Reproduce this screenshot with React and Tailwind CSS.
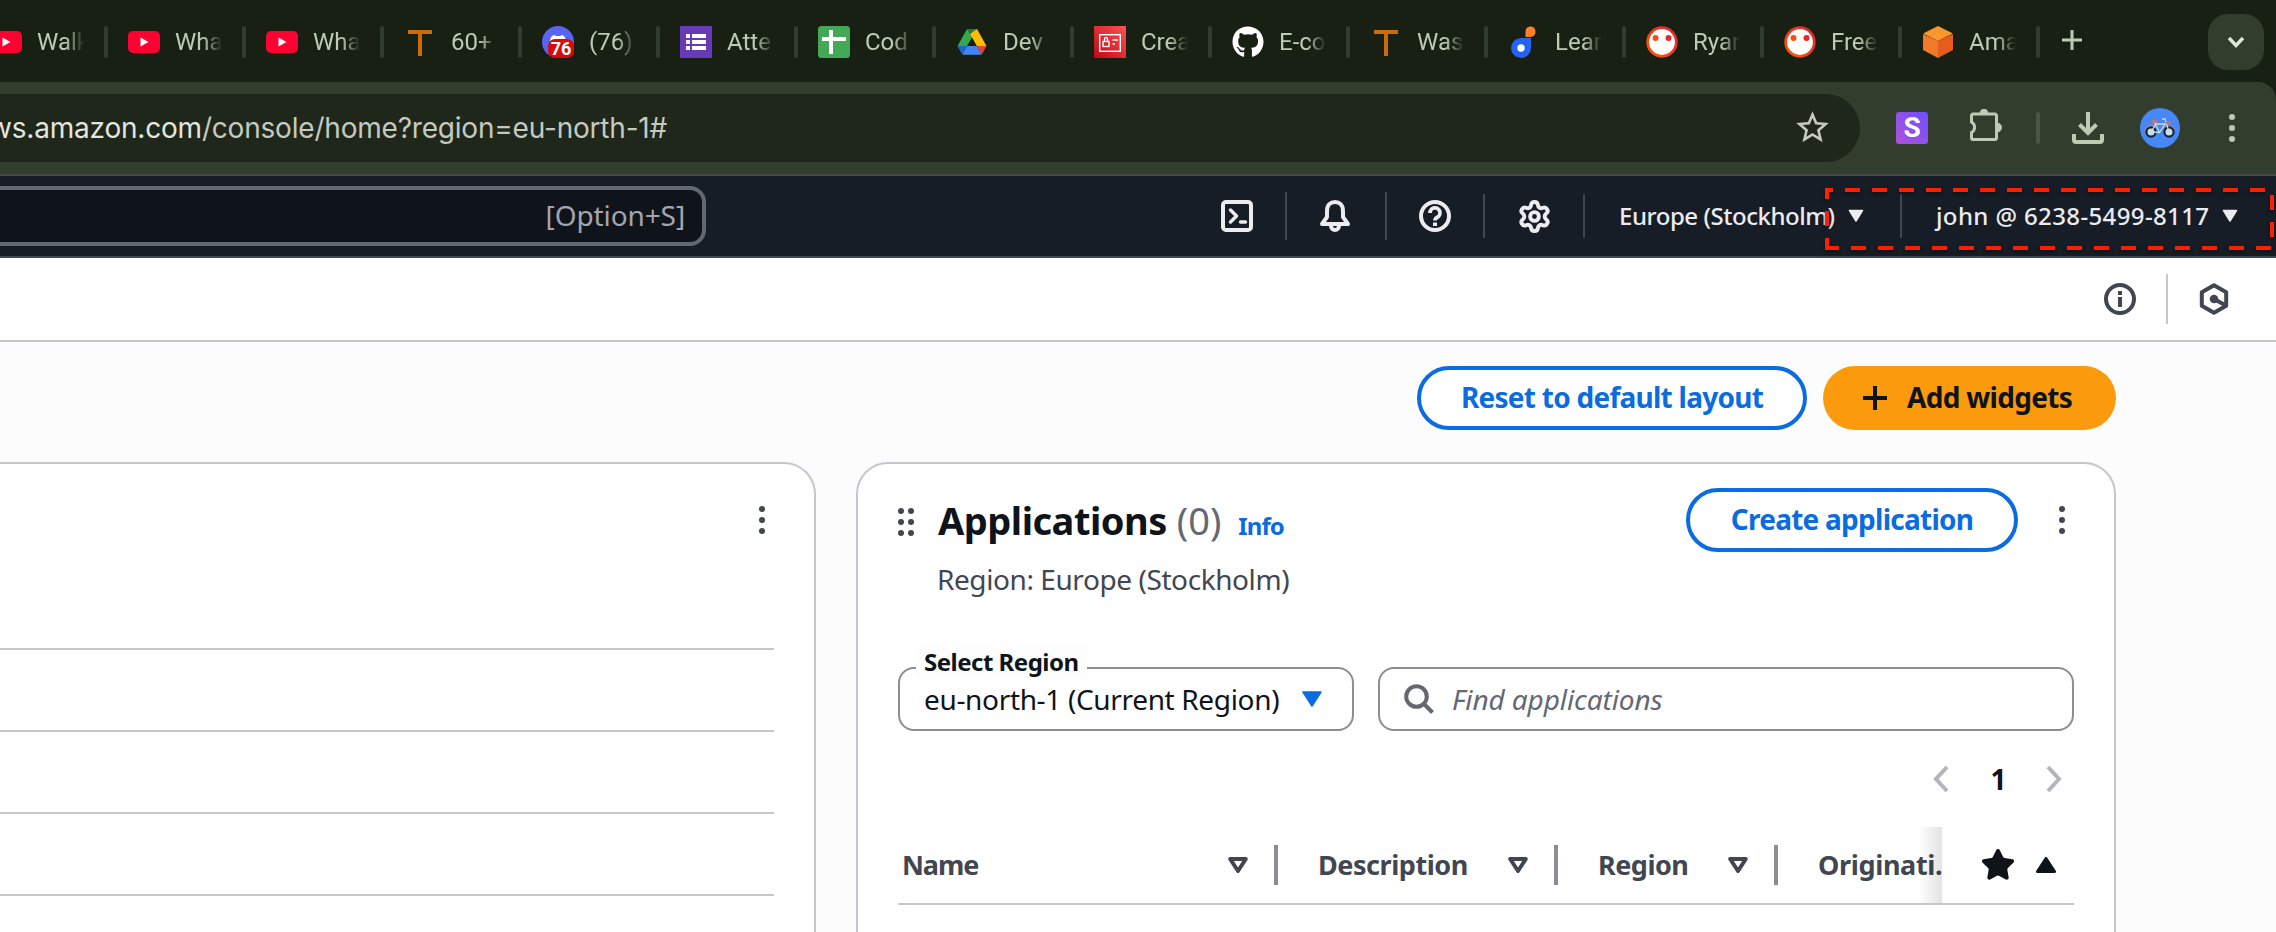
import React from "react";
import { Settings, Star } from "lucide-react";
import { MdStarBorder } from "react-icons/md";
import { FaGithub } from "react-icons/fa";

/* ---------- favicons ---------- */

const YouTube = () => (
  <svg viewBox="0 0 32 22" className="h-[22px] w-8">
    <rect width="32" height="22" rx="5" fill="#ff0033" />
    <path d="M12.5 6.5v9l8-4.5z" fill="#fff" />
  </svg>
);

const LetterT = () => (
  <svg viewBox="0 0 32 32" className="size-8">
    <path d="M4 4h24v4H18v22h-4V8H4z" fill="#cc6a0a" />
  </svg>
);

const Discord = () => (
  <div className="relative size-8">
    <svg viewBox="0 0 32 32" className="size-8">
      <circle cx="16" cy="16" r="16" fill="#5865f2" />
      <path d="M8 16c0-4 2-7 4.500-7l1 1h5l1-1c2.500 0 4.500 3 4.500 7v4H8z" fill="#fff" />
    </svg>
    <span className="absolute right-0 bottom-0 flex h-[19px] w-[26px] items-center justify-center rounded-[7px] bg-[#d80a0a] text-[18px] font-bold leading-none text-white">
      76
    </span>
  </div>
);

const Forms = () => (
  <svg viewBox="0 0 32 32" className="size-8">
    <rect width="32" height="32" rx="1" fill="#673ab7" />
    <path d="M6 8h4v4H6zM12 8h14v4H12zM6 14h4v4H6zM12 14h14v4H12zM6 20h4v4H6zM12 20h14v4H12z" fill="#fff" />
  </svg>
);

const Sheets = () => (
  <svg viewBox="0 0 32 32" className="size-8">
    <rect width="32" height="32" rx="3.500" fill="#43a956" />
    <path d="M11 4h4v7h13v4H15v13h-4V15H4v-4h7z" fill="#fff" />
  </svg>
);

const Drive = () => (
  <svg viewBox="0 0 32 32" className="size-8">
    <path d="M11 3h10l-5 8.500z" fill="#188038" />
    <path d="M11 3l5 8.500L6.500 28 1.500 20z" fill="#34a853" />
    <path d="M21 3l9.500 17h-9.800L14 8z" fill="#fbbc04" />
    <path d="M1.500 20h9.700l-4.700 8.500z" fill="#1967d2" />
    <path d="M20.700 20h9.800l-4.800 8.500z" fill="#ea4335" />
    <path d="M11.200 20h9.500l5 8.700H6.400z" fill="#4285f4" />
    <path d="M16 12l-4.800 8h9.500z" fill="#182013" />
  </svg>
);

const Iam = () => (
  <svg viewBox="0 0 32 32" className="size-8">
    <defs>
      <linearGradient id="iam" x1="0" y1="1" x2="1" y2="0">
        <stop offset="0" stopColor="#bd0816" />
        <stop offset="1" stopColor="#ff5252" />
      </linearGradient>
    </defs>
    <rect width="32" height="32" fill="url(#iam)" />
    <g fill="none" stroke="#fff" strokeWidth="1.400">
      <rect x="5.700" y="8.700" width="20.600" height="16.600" />
      <rect x="9" y="15.500" width="6" height="5" />
      <path d="M10.500 15.500V13a1.500 1.500 0 0 1 3 0v2.500M18.500 14H24M18.500 18H21" />
    </g>
  </svg>
);

const Learn = () => (
  <svg viewBox="0 0 32 32" className="size-8">
    <path d="M3 22a10 10 0 0 1 10-10h10v10a10 10 0 0 1-20 0z" fill="#2563f5" />
    <circle cx="13" cy="22" r="3.700" fill="#fff" />
    <path d="M17.500 11V5a5 5 0 0 1 10 1 5 5 0 0 1-5 5z" fill="#ff8025" />
  </svg>
);

const Face = () => (
  <svg viewBox="0 0 32 32" className="size-8">
    <defs>
      <linearGradient id="face" x1="0" y1="1" x2="1" y2="0">
        <stop offset="0" stopColor="#ff5a00" />
        <stop offset="1" stopColor="#e0203a" />
      </linearGradient>
    </defs>
    <circle cx="16" cy="16" r="14.300" fill="#fff" stroke="url(#face)" strokeWidth="2.800" />
    <circle cx="9.500" cy="12" r="3" fill="#ff4a12" />
    <circle cx="22.500" cy="12" r="3" fill="#e8262c" />
  </svg>
);

const Cube = () => (
  <svg viewBox="0 0 32 32" className="size-8">
    <path d="M16 0l14 7v1L16 15 2 8V7z" fill="#f9962d" />
    <path d="M1 8l15 7v17L1 24z" fill="#f07a28" />
    <path d="M31 8l-15 7v17l15-8z" fill="#e65c1e" />
  </svg>
);

const TABS = [
  [YouTube, "Walk"],
  [YouTube, "Wha"],
  [YouTube, "Wha"],
  [LetterT, "60+"],
  [Discord, "(76)"],
  [Forms, "Atte"],
  [Sheets, "Cod"],
  [Drive, "Dev"],
  [Iam, "Crea"],
  [() => <FaGithub className="size-8 text-white" />, "E-co"],
  [LetterT, "Was"],
  [Learn, "Lear"],
  [Face, "Ryan"],
  [Face, "Free"],
  [Cube, "Ama"],
];

/* ---------- browser chrome ---------- */

function TabStrip() {
  return (
    <div className="flex h-[82px] items-start bg-[#182013] pr-3 font-[Roboto,sans-serif]">
      <div className="-ml-[34px] flex h-[84px] items-center">
        {TABS.map(([Icon, title], i) => (
          <div key={i} className="flex w-[138px] items-center">
            <span className="h-8 w-1 rounded-sm bg-[#333d2e]" />
            <span className="ml-5 flex size-8 shrink-0 items-center justify-center">
              <Icon />
            </span>
            <span className="ml-[15px] w-[47px] overflow-hidden whitespace-nowrap text-2xl text-[#bdcbb5] [mask-image:linear-gradient(to_right,black_60%,transparent)]">
              {title}
            </span>
          </div>
        ))}
        <span className="h-8 w-1 rounded-sm bg-[#333d2e]" />
        <svg viewBox="0 0 20 20" className="mb-1 ml-[22px] size-5">
          <path d="M10 0v20M0 10h20" stroke="#bdcbb5" strokeWidth="3" />
        </svg>
      </div>
      <div className="mt-3.5 ml-auto flex h-14 w-14 items-center justify-center rounded-[20px] bg-[#333d2e]">
        <svg viewBox="0 0 18 12" className="h-3 w-[18px]">
          <path d="M2 2l7 7.500L16 2" fill="none" stroke="#dfe5da" strokeWidth="3.400" />
        </svg>
      </div>
    </div>
  );
}

const Puzzle = () => (
  <svg viewBox="0 0 32 34" className="h-[34px] w-8">
    <path
      d="M3 5h22a1.500 1.500 0 0 1 1.500 1.500v22A1.500 1.500 0 0 1 25 30.500H3A1.500 1.500 0 0 1 1.500 29v-5.500a6 6 0 0 0 0-10.500V6.500A1.500 1.500 0 0 1 3 5z"
      fill="none"
      stroke="#bdcbb5"
      strokeWidth="3"
    />
    <path d="M10 4.500a4 4.500 0 0 1 8 0zM27 14a4.500 4.500 0 0 1 0 9z" fill="#bdcbb5" stroke="#bdcbb5" />
  </svg>
);

const Download = () => (
  <svg viewBox="0 0 32 32" className="size-8">
    <path d="M16 0v21M7.500 12.500L16 21l8.500-8.500M2 22v6a2 2 0 0 0 2 2h24a2 2 0 0 0 2-2v-6" fill="none" stroke="#bdcbb5" strokeWidth="4" />
  </svg>
);

const Bike = () => (
  <svg viewBox="0 0 40 40" className="size-10">
    <circle cx="20" cy="20" r="20" fill="#4688f7" />
    <path d="M5.300 22.500a6.500 6.500 0 0 1 9-4.500M24.500 20a6.500 6.500 0 0 1 10 1.500" fill="none" stroke="#f0785a" strokeWidth="1.400" />
    <g fill="#c4e0ee" stroke="#1b2230" strokeWidth="2.200">
      <circle cx="11" cy="24" r="4.600" />
      <circle cx="29" cy="24" r="4.600" />
    </g>
    <path d="M11 24l5-8h9l-5.500 8.500zM14.500 14.500l5 10M29 24l-4-13h-3" fill="none" stroke="#c9dbe6" strokeWidth="1.300" />
    <path d="M11.500 12.500h5.500v2.500h-4.500zM25.500 13.500h5l-.5 2.500h-4z" fill="#ee6a48" />
  </svg>
);

function Toolbar() {
  return (
    <div className="bg-[#182013]">
      <div className="flex h-[94px] items-center rounded-tr-[18px] border-b-2 border-[#474a41] bg-[#333d2e] pr-[34px] pb-px">
        <div className="flex h-[68px] w-[1860px] items-center justify-between rounded-r-full bg-[#1e271a] pr-[28px]">
          <div className="-ml-[11px] whitespace-nowrap pt-px font-[Inter,sans-serif] text-[28px] tracking-[-0.2px] text-[#c5c9c0]">
            <span className="text-[#e3e6df]">ws.amazon.com</span>/console/home?region=eu-north-1#
          </div>
          <MdStarBorder className="size-[39px] text-[#c5c9c0]" />
        </div>
        <span className="ml-9 flex size-8 items-center justify-center rounded-[3px] bg-linear-to-tr from-[#b04fd8] to-[#6b4dff] font-[Roboto,sans-serif] text-[28px] leading-none font-bold text-white">
          S
        </span>
        <span className="ml-[42px] mb-1">
          <Puzzle />
        </span>
        <span className="ml-[34px] h-8 w-1 rounded-sm bg-[#4b5742]" />
        <span className="ml-8">
          <Download />
        </span>
        <span className="ml-9">
          <Bike />
        </span>
        <svg viewBox="0 0 6 30" className="mr-[7px] ml-auto h-[30px] w-[6px]" fill="#bdcbb5">
          <circle cx="3" cy="4" r="3" />
          <circle cx="3" cy="15" r="3" />
          <circle cx="3" cy="26" r="3" />
        </svg>
      </div>
    </div>
  );
}

/* ---------- console header ---------- */

const HeaderSvg = ({ children }) => (
  <svg viewBox="0 0 32 32" className="size-8" fill="none" stroke="#ebebf0" strokeWidth="4" strokeLinejoin="round">
    {children}
  </svg>
);

const Caret = () => (
  <svg viewBox="0 0 16 14" className="mb-px h-[14px] w-4">
    <path d="M1.500 1.500h13L8 12z" fill="#ebebf0" stroke="#ebebf0" strokeWidth="1.500" strokeLinejoin="round" />
  </svg>
);

function ConsoleHeader() {
  return (
    <header className="relative flex h-[82px] items-center border-b-2 border-[#424650] bg-[#161d26] text-[#ebebf0]">
      <div className="flex h-[60px] w-[706px] items-center justify-end rounded-r-[16px] border-4 border-l-0 border-[#656871] bg-[#0f141a] pr-[17px] pb-0.5 text-[28px] tracking-[-0.1px] text-[#a4a4ad]">
        [Option+S]
      </div>
      <div className="ml-auto flex items-center">
        <span className="mr-8">
          <HeaderSvg>
            <rect x="2" y="2" width="28" height="28" rx="3" />
            <path d="M9.500 10l6 6-6 6M19.500 22h5" strokeLinecap="round" strokeWidth="3.500" />
          </HeaderSvg>
        </span>
        <span className="h-12 w-0.5 bg-[#424650]" />
        <span className="flex w-[98px] justify-center pr-0.5">
          <HeaderSvg>
            <path d="M3 24l5-7v-6c0-6 3.500-9 8-9s8 3 8 9v6l5 7z" />
            <path d="M12 26a4 4 0 0 0 8 0" />
          </HeaderSvg>
        </span>
        <span className="h-12 w-0.5 bg-[#424650]" />
        <span className="flex w-24 justify-center">
          <HeaderSvg>
            <circle cx="16" cy="16" r="14" />
            <path d="M11 13a5 5 0 1 1 7 4.500c-1.500.7-2 1.300-2 3" strokeWidth="3.800" />
            <path d="M16 22.500v3.500" />
          </HeaderSvg>
        </span>
        <span className="h-11 w-0.5 bg-[#424650]" />
        <span className="flex w-[98px] justify-center pl-px">
          <Settings size={35} strokeWidth={2.700} />
        </span>
        <span className="h-11 w-0.5 bg-[#424650]" />
        <span className="flex w-[315px] items-center pl-[34px]">
          <span className="w-[229px] text-2xl font-medium tracking-[-0.46px] whitespace-nowrap">Europe (Stockholm)</span>
          <Caret />
        </span>
        <span className="h-11 w-0.5 bg-[#424650]" />
        <span className="flex w-[374px] items-center pl-[34px]">
          <span className="w-[286px] text-2xl font-medium tracking-[0.38px] whitespace-nowrap">john @ 6238-5499-8117</span>
          <Caret />
        </span>
      </div>
      {/* dashed highlight around the account menu */}
      <svg viewBox="1820 184 456 72" className="absolute top-2 right-0 h-[72px] w-[456px] drop-shadow-[0_2px_2px_rgba(0,0,0,0.5)]" fill="none" stroke="#ff1e00" strokeWidth="4">
        <path d="M1845 190H2272V248H1842" strokeDasharray="15 12" />
        <path d="M1833 190H1827V199M1827 211V226M1827 238V248H1839" />
      </svg>
    </header>
  );
}

function SubHeader() {
  return (
    <div className="flex h-[84px] items-center justify-end border-b-2 border-[#c6c6cd] bg-white pr-[46px]">
      <svg viewBox="0 0 32 32" className="size-8">
        <circle cx="16" cy="16" r="14" fill="none" stroke="#424650" strokeWidth="4" />
        <path d="M14 8h4v4h-4zM14 14h4v10h-4z" fill="#424650" />
      </svg>
      <span className="ml-[30px] h-[50px] w-0.5 bg-[#c6c6cd]" />
      <svg viewBox="0 0 32 32" className="ml-[30px] size-8">
        <path d="M16 2.300l12.200 7v13.400L16 29.700l-12.200-7V9.300z" fill="none" stroke="#424650" strokeWidth="4" strokeLinejoin="round" />
        <circle cx="16" cy="16" r="4.300" fill="#424650" />
        <path d="M16 16l11 6" stroke="#424650" strokeWidth="4" />
      </svg>
    </div>
  );
}

/* ---------- widgets ---------- */

const Kebab = () => (
  <svg viewBox="0 0 24 32" className="h-8 w-6" fill="#424650">
    <circle cx="12" cy="5" r="3" />
    <circle cx="12" cy="16" r="3" />
    <circle cx="12" cy="27" r="3" />
  </svg>
);

const SortIcon = () => (
  <svg viewBox="0 0 20 16" className="mr-[26px] ml-auto h-4 w-5 shrink-0">
    <path d="M2.200 2h15.600L10 14z" fill="none" stroke="#424650" strokeWidth="4" strokeLinejoin="round" />
  </svg>
);

function LeftWidget() {
  return (
    <section className="h-[600px] w-[816px] rounded-tr-[32px] border-t-2 border-r-2 border-[#c6c6cd] bg-white pr-10">
      <div className="flex h-[186px] justify-end border-b-2 border-[#c6c6cd] pt-10">
        <Kebab />
      </div>
      <div className="h-[82px] border-b-2 border-[#c6c6cd]" />
      <div className="h-[82px] border-b-2 border-[#c6c6cd]" />
      <div className="h-[82px] border-b-2 border-[#c6c6cd]" />
    </section>
  );
}

function ApplicationsWidget() {
  return (
    <section className="h-[600px] w-[1260px] rounded-t-[32px] border-2 border-[#c6c6cd] bg-white px-10 pt-6">
      <div className="flex h-16 items-center">
        <svg viewBox="0 0 16 28" className="mt-1 h-7 w-4" fill="#424650">
          <circle cx="3" cy="3" r="3" />
          <circle cx="13" cy="3" r="3" />
          <circle cx="3" cy="14" r="3" />
          <circle cx="13" cy="14" r="3" />
          <circle cx="3" cy="25" r="3" />
          <circle cx="13" cy="25" r="3" />
        </svg>
        <h2 className="ml-6 flex items-baseline whitespace-nowrap">
          <span className="text-[38px] leading-[48px] font-bold tracking-[-0.5px]">Applications</span>
          <span className="ml-2.5 text-[38px] leading-[48px] text-[#656871]">(0)</span>
          <span className="ml-[17px] text-2xl leading-8 font-bold tracking-[-0.9px] text-[#0a6ce0]">Info</span>
        </h2>
        <button className="ml-auto h-16 w-[332px] rounded-full border-4 border-[#0a6ce0] bg-white pb-0.5 text-[28px] leading-none font-bold tracking-[-0.74px] text-[#0a6ce0]">
          Create application
        </button>
        <span className="ml-8">
          <Kebab />
        </span>
      </div>
      <p className="mt-[7px] pl-[39px] text-[28px] leading-10 tracking-[-0.42px] text-[#424650]">Region: Europe (Stockholm)</p>

      <div className="mt-[68px] flex gap-6">
        <div className="relative flex h-16 w-[456px] items-center rounded-[16px] border-2 border-[#8c8c94] pl-[24px]">
          <span className="absolute -top-[23px] left-4 h-8 w-[171px] bg-[#fdfdfd] pl-2 text-2xl leading-8 font-bold tracking-[-0.5px] whitespace-nowrap">
            Select Region
          </span>
          <span className="w-[378px] pb-px text-[28px] tracking-[-0.34px] whitespace-nowrap">eu-north-1 (Current Region)</span>
          <svg viewBox="0 0 20 16" className="h-4 w-5">
            <path d="M1 1h18l-9 14z" fill="#0a6ce0" stroke="#0a6ce0" strokeWidth="1.500" strokeLinejoin="round" />
          </svg>
        </div>
        <div className="flex h-16 flex-1 items-center rounded-[16px] border-2 border-[#8c8c94] pl-6">
          <svg viewBox="0 0 30 30" className="size-[30px]" fill="none" stroke="#656871" strokeWidth="4">
            <circle cx="12.500" cy="12.500" r="10.300" />
            <path d="M20 20l8.500 8.500" />
          </svg>
          <span className="ml-[18px] text-[28px] tracking-[-0.1px] text-[#656871] italic">Find applications</span>
        </div>
      </div>

      <div className="mt-7 flex h-10 items-center justify-end pr-3 text-[28px] font-bold">
        <svg viewBox="0 0 16 28" className="h-7 w-4">
          <path d="M14 2L3 14l11 12" fill="none" stroke="#b4b4bb" strokeWidth="4" />
        </svg>
        <span className="w-[97px] pl-0.5 text-center">1</span>
        <svg viewBox="0 0 16 28" className="h-7 w-4">
          <path d="M2 2l11 12L2 26" fill="none" stroke="#b4b4bb" strokeWidth="4" />
        </svg>
      </div>

      <div className="mt-7 flex h-[78px] border-b-2 border-[#c6c6cd] text-[27px] font-bold text-[#424650]">
        <div className="flex w-[380px] items-center pl-1">
          <span className="tracking-[-1.1px]">Name</span>
          <SortIcon />
          <span className="h-10 w-1 bg-[#8c8c94]" />
        </div>
        <div className="flex w-[280px] items-center pl-10">
          <span className="tracking-[-0.45px]">Description</span>
          <SortIcon />
          <span className="h-10 w-1 bg-[#8c8c94]" />
        </div>
        <div className="flex w-[220px] items-center pl-10">
          <span className="tracking-[-0.5px]">Region</span>
          <SortIcon />
          <span className="h-10 w-1 bg-[#8c8c94]" />
        </div>
        <div className="relative flex w-[164px] items-center overflow-hidden pl-10">
          <span className="tracking-[-0.35px] whitespace-nowrap">Originati...</span>
          <span className="absolute inset-y-0 right-0 w-6 bg-linear-to-l from-[#0f141a]/12 to-transparent" />
        </div>
        <div className="flex items-center pl-[38px]">
          <Star className="size-9 text-[#0f141a]" fill="#0f141a" strokeWidth={1.500} />
          <svg viewBox="0 0 20 16" className="ml-5 h-4 w-5">
            <path d="M10 1.500L18.500 14.500h-17z" fill="#0f141a" stroke="#0f141a" strokeWidth="3" strokeLinejoin="round" />
          </svg>
        </div>
      </div>
    </section>
  );
}

export default function App() {
  return (
    <div className="h-[932px] w-[2276px] overflow-hidden bg-[#fcfcfd] font-['Noto_Sans',sans-serif] text-[#0f141a]">
      <TabStrip />
      <Toolbar />
      <ConsoleHeader />
      <SubHeader />
      <main className="pt-6 pr-40">
        <div className="flex justify-end gap-4">
          <button className="h-16 w-[390px] rounded-full border-4 border-[#0a6ce0] bg-white pb-0.5 text-[28px] leading-none font-bold tracking-[-0.74px] text-[#0a6ce0]">
            Reset to default layout
          </button>
          <button className="flex h-16 w-[293px] items-center rounded-full bg-[#fc9a0e] pb-0.5 pl-10 text-[28px] leading-none font-bold tracking-[-0.7px]">
            <svg viewBox="0 0 24 24" className="mt-0.5 size-6">
              <path d="M12 0v24M0 12h24" stroke="#0f141a" strokeWidth="4" />
            </svg>
            <span className="ml-5">Add widgets</span>
          </button>
        </div>
        <div className="mt-8 flex gap-10">
          <LeftWidget />
          <ApplicationsWidget />
        </div>
      </main>
    </div>
  );
}
